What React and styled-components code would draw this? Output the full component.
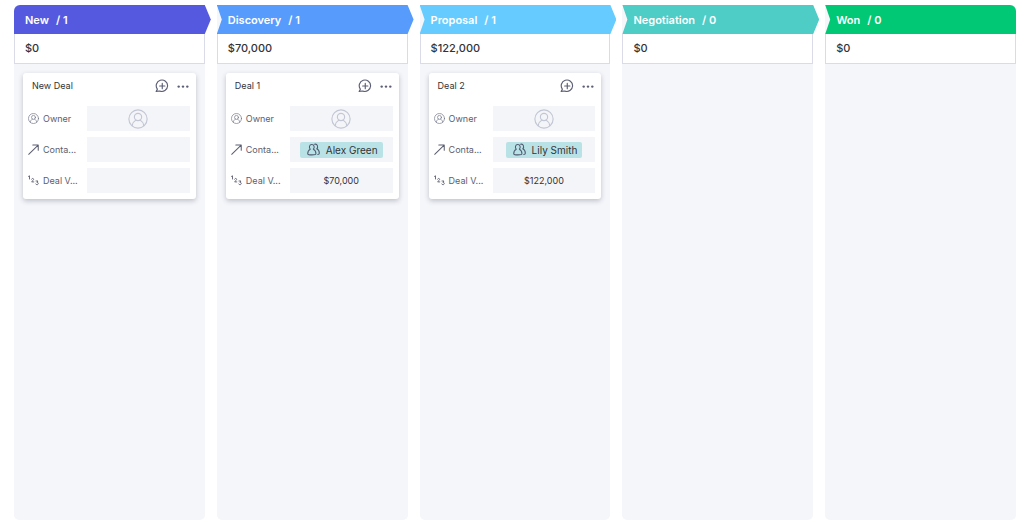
import React from "react";
import styled, { createGlobalStyle } from "styled-components";

const GlobalStyle = createGlobalStyle`
  *, *::before, *::after { box-sizing: border-box; }
  body {
    margin: 0;
    background: #fff;
    color: #323338;
    font-family: Inter, "Liberation Sans", sans-serif;
  }
`;

const Board = styled.main`
  display: grid;
  grid-template-columns: repeat(5, minmax(0, 1fr));
  column-gap: 12px;
  min-height: 100vh;
  padding: 5px 4px 8px 14px;
`;

const Column = styled.section`
  display: flex;
  flex-direction: column;
  min-width: 0;
  background: #f5f6fa;
  border-radius: 5px;
`;

const shapes = {
  first: "polygon(0 0, calc(100% - 6px) 0, 100% 50%, calc(100% - 6px) 100%, 0 100%)",
  middle:
    "polygon(0 0, calc(100% - 6px) 0, 100% 50%, calc(100% - 6px) 100%, 0 100%, 5px 50%)",
  last: "polygon(0 0, 100% 0, 100% 100%, 0 100%, 5px 50%)",
};

const StageHeader = styled.h2`
  display: flex;
  align-items: center;
  gap: 7px;
  height: 29px;
  margin: 0 ${(p) => (p.$shape === "last" ? "0" : "-6px")} 0 0;
  padding: 0 11px;
  background: ${(p) => p.$color};
  clip-path: ${(p) => shapes[p.$shape]};
  border-top-left-radius: ${(p) => (p.$shape === "first" ? "6px" : "0")};
  border-top-right-radius: ${(p) => (p.$shape === "last" ? "6px" : "0")};
  color: #fff;
  font-size: 11px;
  font-weight: 600;
  line-height: 16px;
  white-space: pre;
`;

const Total = styled.div`
  height: 30px;
  padding: 0 10px;
  background: #fff;
  border: 1px solid #d9dbe8;
  border-top: 0;
  font-size: 11px;
  font-weight: 500;
  line-height: 29px;
`;

const Card = styled.article`
  margin: 9px 9px 0;
  padding: 0 6px 6px 5px;
  background: #fff;
  border-radius: 3px;
  box-shadow: 0 2px 5px rgba(40, 44, 70, 0.26);
`;

const CardHead = styled.header`
  display: flex;
  align-items: center;
  height: 26px;
  margin-bottom: 7px;
  padding: 0 1px 0 4px;
`;

const CardTitle = styled.h3`
  flex: 1;
  margin: 0;
  font-size: 9px;
  font-weight: 400;
  line-height: 14px;
`;

const IconButton = styled.button`
  display: flex;
  margin: 0 0 0 8px;
  padding: 0;
  border: 0;
  background: none;
  color: #5b5e74;
  cursor: pointer;
`;

const Fields = styled.dl`
  display: grid;
  grid-template-columns: 53px minmax(0, 1fr);
  grid-auto-rows: 25px;
  gap: 6px;
  margin: 0;
`;

const Label = styled.dt`
  display: flex;
  align-items: center;
  gap: 4px;
  color: #5b5e70;
  font-size: 9px;
  line-height: 14px;
  white-space: nowrap;

  svg { flex: none; }
`;

const Value = styled.dd`
  display: flex;
  align-items: center;
  justify-content: center;
  margin: 0;
  background: #f4f5f8;
  color: #323338;
  font-size: 9px;
  line-height: 14px;
`;

const Chip = styled.span`
  display: flex;
  align-items: center;
  gap: 6px;
  height: 16px;
  padding: 0 5px 0 7px;
  background: #b9e2e6;
  border-radius: 2px;
  font-size: 10px;
`;

function Svg({ size, stroke = 1.2, color = "currentColor", children }) {
  return (
    <svg
      width={size}
      height={size}
      viewBox="0 0 16 16"
      fill="none"
      stroke={color}
      strokeWidth={stroke}
      strokeLinecap="round"
      strokeLinejoin="round"
      aria-hidden="true"
    >
      {children}
    </svg>
  );
}

const CommentIcon = () => (
  <Svg size={14} stroke={1.3}>
    <path d="M1.3 14.2 2.7 11.6A6.5 6.5 0 1 1 5.4 13.7Z" />
    <path d="M8.3 5v6M5.3 8h6" />
  </Svg>
);

const MoreIcon = () => (
  <svg width="12" height="12" viewBox="0 0 12 12" fill="currentColor" aria-hidden="true">
    <circle cx="1.7" cy="6.6" r="1.2" />
    <circle cx="6" cy="6.6" r="1.2" />
    <circle cx="10.3" cy="6.6" r="1.2" />
  </svg>
);

const PersonIcon = ({ size, color, stroke }) => (
  <Svg size={size} color={color} stroke={stroke}>
    <circle cx="8" cy="8" r="7.3" />
    <circle cx="8" cy="6.4" r="2.9" />
    <path d="M3.4 13.4C3.6 11.2 4.7 9.8 6.3 8.9M12.6 13.4C12.4 11.2 11.3 9.8 9.7 8.9" />
  </Svg>
);

const ArrowIcon = () => (
  <Svg size={11} stroke={1.5}>
    <path d="M1 15 14.8 1.5M7 1.3h7.9v7.9" />
  </Svg>
);

const NumbersIcon = () => (
  <svg
    width="11"
    height="11"
    viewBox="0 0 11 11"
    fill="none"
    stroke="currentColor"
    strokeWidth="0.9"
    strokeLinecap="round"
    strokeLinejoin="round"
    aria-hidden="true"
  >
    <path d="M.5 1.4 1.5.8V4" />
    <path d="M3.6 4.1C3.9 3.1 5.8 3.2 5.6 4.5 5.5 5.2 4.2 6 3.6 6.9H5.8" />
    <path d="M8 6h2L8.9 7.3C10.7 7.2 10.7 9.7 9 9.7 8.4 9.7 8 9.4 7.8 9" />
  </svg>
);

const PeopleIcon = () => (
  <Svg size={13} stroke={1.3} color="#505b70">
    <path d="M4 7.6C2.2 6 2.700 1.900 5.900 1.900S9.600 6 7.800 7.600C9.900 8.600 11 10.800 11 13.200C11 14.500 9 14.600 6 14.600S.9 14.500.9 13.200C.9 10.800 1.900 8.600 4 7.600Z" />
    <path d="M9.300 1.500C12.900 .5 14.100 5.300 12 7.200C14.100 8.200 15.200 10.400 15.200 12.600C15.200 13.700 14.300 14 13.200 14.100" />
  </Svg>
);

const stages = [
  { name: "New", count: 1, total: "$0", color: "#5559df", deals: [{ title: "New Deal" }] },
  {
    name: "Discovery",
    count: 1,
    total: "$70,000",
    color: "#579bfc",
    deals: [{ title: "Deal 1", contact: "Alex Green", value: "$70,000" }],
  },
  {
    name: "Proposal",
    count: 1,
    total: "$122,000",
    color: "#66ccff",
    deals: [{ title: "Deal 2", contact: "Lily Smith", value: "$122,000" }],
  },
  { name: "Negotiation", count: 0, total: "$0", color: "#4eccc6", deals: [] },
  { name: "Won", count: 0, total: "$0", color: "#00c875", deals: [] },
];

function DealCard({ title, contact, value }) {
  return (
    <Card>
      <CardHead>
        <CardTitle>{title}</CardTitle>
        <IconButton type="button" aria-label="Add update"><CommentIcon /></IconButton>
        <IconButton type="button" aria-label="More options"><MoreIcon /></IconButton>
      </CardHead>
      <Fields>
        <Label><PersonIcon size={11} stroke={1} color="#74778a" />Owner</Label>
        <Value><PersonIcon size={20} color="#c3c6d4" stroke={0.9} /></Value>
        <Label><ArrowIcon />Conta...</Label>
        <Value>{contact && <Chip><PeopleIcon />{contact}</Chip>}</Value>
        <Label><NumbersIcon />Deal V...</Label>
        <Value>{value}</Value>
      </Fields>
    </Card>
  );
}

export default function App() {
  return (
    <>
      <GlobalStyle />
      <Board>
        {stages.map((s, i) => (
          <Column key={s.name}>
            <StageHeader
              $color={s.color}
              $shape={i === 0 ? "first" : i === stages.length - 1 ? "last" : "middle"}
            >
              <span>{s.name}</span>
              <span>/ {s.count}</span>
            </StageHeader>
            <Total>{s.total}</Total>
            {s.deals.map((d) => <DealCard key={d.title} {...d} />)}
          </Column>
        ))}
      </Board>
    </>
  );
}
